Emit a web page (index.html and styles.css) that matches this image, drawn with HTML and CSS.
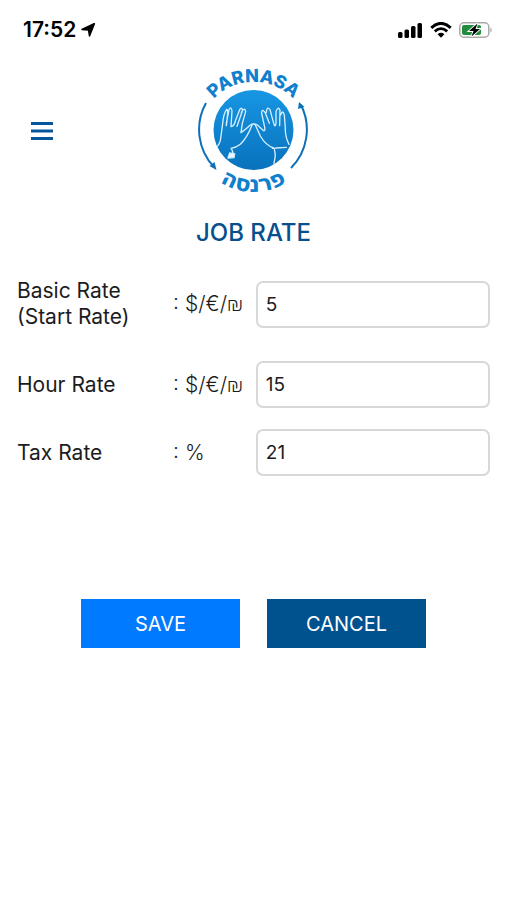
FILE: index.html
```html
<!DOCTYPE html>
<html lang="en">
<head>
<meta charset="utf-8">
<meta name="viewport" content="width=device-width, initial-scale=1">
<title>Job Rate</title>
<link rel="stylesheet" href="styles.css">
</head>
<body>
<div class="status-bar">
  <div class="status-left">
    <span>17:52</span>
    <svg width="14" height="14" viewBox="0 0 14 14" aria-hidden="true"><path d="M13.500 .5 8.500 13 7.500 7 1 6.500Z" stroke="#000" stroke-width="1.500" stroke-linejoin="round"/></svg>
  </div>
  <div class="status-right">
    <svg width="25" height="16" viewBox="0 0 25 16" aria-hidden="true"><rect x="0" y="10" width="4.500" height="6" rx="1.500"/><rect x="6.500" y="7.500" width="4.500" height="8.500" rx="1.500"/><rect x="13" y="4" width="4.500" height="12" rx="1.500"/><rect x="19.500" y="1" width="4.500" height="15" rx="1.500"/></svg>
    <svg width="22" height="16" viewBox="0 0 22 16" fill="none" stroke="#000" aria-hidden="true"><path d="M1.300 5.800Q11-3 20.700 5.800" stroke-width="3"/><path d="M4.800 9.400Q11 3.800 17.200 9.400" stroke-width="2.800"/><path d="M11 15.700 7.600 12.200Q11 9.400 14.400 12.200Z" fill="#000" stroke="none"/></svg>
    <svg width="34" height="16" viewBox="0 0 34 16" aria-hidden="true"><rect x=".8" y=".8" width="29" height="14.400" rx="4" fill="#fff" stroke="#aaa" stroke-width="1.500"/><rect x="3" y="3" width="19" height="10" rx="2" fill="#248a3d"/><path d="M31.500 5.500Q34 8 31.500 10.500Z" fill="#999"/><path d="M18.500 1.500 10 9H14.500L12.500 14.500 21 7H16.500Z" stroke="#fff" stroke-width="1.800" paint-order="stroke"/></svg>
  </div>
</div>
<header class="header">
  <button class="menu" type="button" aria-label="Menu">
    <svg width="22" height="20" viewBox="0 0 22 20"><path d="M0 2.500H22M0 10H22M0 17.500H22" stroke="#07569b" stroke-width="3"/></svg>
  </button>
  <svg class="logo" width="130" height="145" viewBox="0 0 130 145" role="img" aria-label="Parnasa">
    <defs>
      <linearGradient id="blue" x1="0" y1="0" x2="0" y2="1"><stop offset="0" stop-color="#1896e3"/><stop offset="1" stop-color="#0872bd"/></linearGradient>
      <path id="top-arc" d="M12.500 75A52 48 0 0 1 116.500 75"/>
      <path id="bottom-arc" d="M2.500 75A62 62 0 0 0 126.500 75"/>
      <clipPath id="disc"><circle cx="64.500" cy="75" r="40"/></clipPath>
    </defs>
    <text class="logo-latin"><textPath href="#top-arc" startOffset="50%" text-anchor="middle">PARNASA</textPath></text>
    <circle cx="64.500" cy="75" r="40" fill="url(#blue)"/>
    <g clip-path="url(#disc)">
      <g class="hands" transform="translate(20 30) scale(.3333)">
        <path d="M20 188Q34 178 35 160L41 115Q44 84 53 73 59 72 52 122M52 115 60 74Q66 62 69 78L66 125M69 124Q76 122 80 105L92 74Q100 64 100 78L84 124M97 82Q108 64 110 80L100 115 96 143Q112 132 124 120 134 114 145 120L164 137Q170 139 166 122L158 85Q158 69 168 82L181 115M172 82Q174 62 183 74L195 118Q199 128 201 115V80Q207 62 213 76L212 122M215 90Q221 72 226 90L229 130Q228 155 240 178"/>
        <path d="M130 118Q115 158 94 178 82 188 66 190M138 118 154 153Q170 181 194 189M67 190 72 203 59 216M190 190H196L199 212 195 235M200 189 232 187"/>
        <path d="M62 204 57 219 75 218 77 207Z" class="cuff"/>
      </g>
    </g>
    <g fill="none" stroke="#0d70b8" stroke-width="2">
      <path d="M17 48A54.500 54.500 0 0 0 25 112M112 50A54.500 54.500 0 0 1 102 113"/>
      <path d="M27.500 115 20.500 111 25.500 107ZM110 47 115.500 52 109 54Z" fill="#0d70b8" stroke="none"/>
    </g>
    <text class="logo-hebrew"><textPath href="#bottom-arc" startOffset="50%" text-anchor="middle">פרנסה</textPath></text>
  </svg>
</header>
<main>
  <h1>JOB RATE</h1>
  <form>
    <div class="row row-first"><label for="basic">Basic Rate<br>(Start Rate)</label><span class="unit">: $/€/<span class="shekel">₪</span></span><input id="basic" type="text" inputmode="decimal" value="5"></div>
    <div class="row"><label for="hour">Hour Rate</label><span class="unit">: $/€/<span class="shekel">₪</span></span><input id="hour" type="text" inputmode="decimal" value="15"></div>
    <div class="row"><label for="tax">Tax Rate</label><span class="unit">: %</span><input id="tax" type="text" inputmode="decimal" value="21"></div>
    <div class="actions"><button class="save" type="submit">SAVE</button><button class="cancel" type="button">CANCEL</button></div>
  </form>
</main>
</body>
</html>
```
FILE: styles.css
```css
* { box-sizing: border-box; }
body { margin: 0; background: #fff; color: #1c1c1e; font-family: Inter, "Liberation Sans", sans-serif; }
button, input { font: inherit; }
.status-bar { display: flex; justify-content: space-between; align-items: center; padding: 18px 14px 13px 23px; color: #000; }
.status-left { display: flex; align-items: center; gap: 5px; font-size: 21px; line-height: 24px; font-weight: 600; }
.status-right { display: flex; align-items: center; gap: 7px; }
.header { display: grid; grid-template-columns: 1fr auto 1fr; align-items: center; }
.menu { justify-self: start; display: flex; margin-top: 7px; margin-left: 21px; padding: 10px; border: 0; background: none; }
.logo { display: block; }
.logo-latin { font-size: 18px; font-weight: 800; fill: #0f80ce; }
.logo-hebrew { font-family: "DejaVu Sans", "Liberation Sans", sans-serif; font-size: 23px; font-weight: 700; fill: #0f80ce; }
.hands { fill: none; stroke: #d5eeff; stroke-width: 4px; stroke-linejoin: round; stroke-linecap: round; }
.cuff { fill: #e8f6ff; }
h1 { margin: 18px 0 30px; text-align: center; font-size: 24px; line-height: 30px; font-weight: 500; color: #07508c; }
form { padding: 0 17px; }
.row { display: grid; grid-template-columns: 66fr 35fr 99fr; align-items: center; margin-bottom: 21px; }
.row-first { margin-bottom: 31px; }
.row label { font-size: 21px; line-height: 26px; }
.unit { font-size: 21px; line-height: 26px; font-weight: 300; white-space: nowrap; }
.shekel { font-family: Roboto, "Liberation Sans", sans-serif; line-height: 1; }
.row input { width: 100%; min-width: 0; height: 47px; padding: 0 8px; border: 2px solid #d8d8d8; border-radius: 7px; background: #fff; color: inherit; font-size: 19px; }
.actions { display: flex; justify-content: center; gap: 27px; margin-top: 123px; }
.actions button { width: 159px; height: 49px; border: 0; color: #fff; font-size: 20px; }
.save { background: #007aff; }
.cancel { background: #00528f; }
```
